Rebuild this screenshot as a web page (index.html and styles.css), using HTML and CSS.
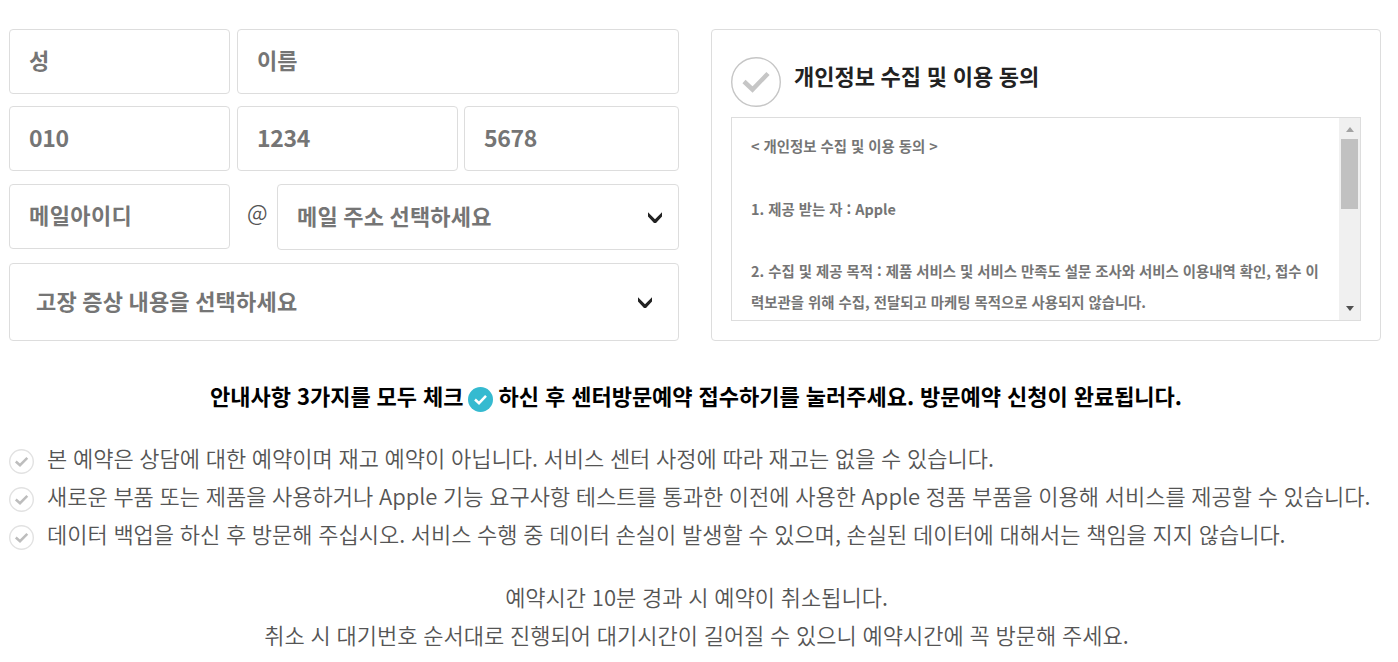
FILE: index.html
```
<!DOCTYPE html>
<html lang="ko">

<head>
    <meta charset="UTF-8">
    <meta name="viewport" content="width=device-width, initial-scale=1.0">
    <title>센터방문예약</title>
    <link rel="stylesheet" href="styles.css">
</head>

<body>
    <div class="top">
        <div class="form">
            <div class="row">
                <div class="field first">성</div>
                <div class="field grow">이름</div>
            </div>
            <div class="row">
                <div class="field first num">010</div>
                <div class="field middle num">1234</div>
                <div class="field grow num">5678</div>
            </div>
            <div class="row mail">
                <div class="field first mail_id">메일아이디</div>
                <span class="at">@</span>
                <div class="field select">
                    <span>메일 주소 선택하세요</span>
                    <svg class="arrow" viewBox="0 0 16 12"><path d="M1 0.3L8 7.2L15 0.3V4.6L9 11H7L1 4.6Z" /></svg>
                </div>
            </div>
            <div class="field symptom">
                <span>고장 증상 내용을 선택하세요</span>
                <svg class="arrow" viewBox="0 0 16 12"><path d="M1 0.3L8 7.2L15 0.3V4.6L9 11H7L1 4.6Z" /></svg>
            </div>
        </div>

        <div class="agree">
            <div class="agree_title">
                <svg class="check_big" viewBox="0 0 50 50">
                    <circle cx="25" cy="25" r="24.3" />
                    <path d="M13 24.5L21.5 32.5L37 16.5" />
                </svg>
                <h2>개인정보 수집 및 이용 동의</h2>
            </div>
            <div class="terms">
                <div class="terms_text">
                    <p>&lt; 개인정보 수집 및 이용 동의 &gt;</p>
                    <p>1. 제공 받는 자 : Apple</p>
                    <p>2. 수집 및 제공 목적 : 제품 서비스 및 서비스 만족도 설문 조사와 서비스 이용내역 확인, 접수 이<br>력보관을 위해 수집, 전달되고 마케팅 목적으로 사용되지 않습니다.</p>
                </div>
                <div class="scrollbar">
                    <i class="up"></i>
                    <div class="thumb"></div>
                    <i class="down"></i>
                </div>
            </div>
        </div>
    </div>

    <p class="guide">
        <span>안내사항 3가지를 모두 체크</span>
        <svg class="check_on" viewBox="0 0 25 25">
            <circle cx="12.5" cy="12.5" r="12.5" />
            <path d="M7 12.5L11 16.2L18 8.8" />
        </svg>
        <span>하신 후 센터방문예약 접수하기를 눌러주세요. 방문예약 신청이 완료됩니다.</span>
    </p>

    <ul class="notices">
        <li>
            <svg class="check" viewBox="0 0 25 25"><circle cx="12.5" cy="12.5" r="11.8" /><path d="M6.8 12.5L11 16.2L18.3 8.8" /></svg>
            <span>본 예약은 상담에 대한 예약이며 재고 예약이 아닙니다. 서비스 센터 사정에 따라 재고는 없을 수 있습니다.</span>
        </li>
        <li>
            <svg class="check" viewBox="0 0 25 25"><circle cx="12.5" cy="12.5" r="11.8" /><path d="M6.8 12.5L11 16.2L18.3 8.8" /></svg>
            <span>새로운 부품 또는 제품을 사용하거나 Apple 기능 요구사항 테스트를 통과한 이전에 사용한 Apple 정품 부품을 이용해 서비스를 제공할 수 있습니다.</span>
        </li>
        <li>
            <svg class="check" viewBox="0 0 25 25"><circle cx="12.5" cy="12.5" r="11.8" /><path d="M6.8 12.5L11 16.2L18.3 8.8" /></svg>
            <span>데이터 백업을 하신 후 방문해 주십시오. 서비스 수행 중 데이터 손실이 발생할 수 있으며, 손실된 데이터에 대해서는 책임을 지지 않습니다.</span>
        </li>
    </ul>

    <div class="cancel">
        <p>예약시간 10분 경과 시 예약이 취소됩니다.</p>
        <p>취소 시 대기번호 순서대로 진행되어 대기시간이 길어질 수 있으니 예약시간에 꼭 방문해 주세요.</p>
    </div>
</body>

</html>
```

FILE: styles.css
```
* {
    box-sizing: border-box;
}

body {
    margin: 0;
    padding: 29px 17px 0 9px;
    height: 662px;
    overflow: hidden;
    background: #fff;
    color: #555;
    font-family: "Noto Sans CJK KR", "Noto Sans", sans-serif;
    font-size: 22px;
    font-weight: 350;
    white-space: nowrap;
}

p,
h2,
ul {
    margin: 0;
    padding: 0;
}

.top {
    display: flex;
    justify-content: space-between;
    height: 312px;
}

.form {
    width: 670px;
}

.row {
    display: flex;
    height: 65px;
    margin-bottom: 12px;
}

.field {
    display: flex;
    align-items: center;
    height: 65px;
    padding: 0 19px 5px;
    border: 1px solid #ddd;
    border-radius: 4px;
    color: #757575;
    font-weight: 700;
}

.num {
    padding-bottom: 4px;
    font-size: 23px;
    letter-spacing: -0.3px;
}

.first {
    width: 221px;
    margin-right: 7px;
}

.middle {
    width: 221px;
    margin-right: 6px;
}

.grow {
    flex: 1;
}

.mail {
    height: 66px;
    margin: 13px 0;
}

.mail_id {
    letter-spacing: 0.4px;
}

.at {
    width: 40px;
    margin-top: 10px;
    line-height: 34px;
    padding-left: 10px;
}

.select {
    flex: 1;
    height: 66px;
    justify-content: space-between;
    padding-right: 15px;
    letter-spacing: 0.2px;
    word-spacing: -1px;
}

.symptom {
    height: 78px;
    justify-content: space-between;
    padding: 0 25px 5px 26px;
    letter-spacing: 0.2px;
    word-spacing: -1px;
}

.arrow {
    width: 16px;
    height: 12px;
    margin-top: 7px;
    fill: #222;
}

.agree {
    width: 670px;
    padding: 27px 19px 19px;
    border: 1px solid #ddd;
    border-radius: 4px;
}

.agree_title {
    display: flex;
    height: 60px;
}

.check_big {
    width: 50px;
    height: 50px;
    margin-right: 13px;
    fill: none;
    stroke: #c6c6c6;
    stroke-width: 1.4;
}

.check_big path {
    stroke-width: 4.5;
}

.agree h2 {
    color: #222;
    font-size: 22px;
    font-weight: 700;
    line-height: 36px;
    word-spacing: -0.5px;
}

.terms {
    display: flex;
    height: 204px;
    border: 1px solid #ddd;
}

.terms_text {
    flex: 1;
    padding: 12px 19px 0;
    overflow: hidden;
    color: #757575;
    font-size: 14.4px;
    font-weight: 700;
    line-height: 31.25px;
}

.terms_text p {
    margin-bottom: 31.25px;
}

.scrollbar {
    display: flex;
    flex-direction: column;
    align-items: center;
    width: 21px;
    padding: 9px 0;
    background: #f0f0f0;
}

.scrollbar i {
    border: 4.5px solid transparent;
}

.scrollbar .up {
    border-top: 0;
    border-bottom: 5px solid #a3a3a3;
}

.scrollbar .down {
    margin-top: auto;
    border-bottom: 0;
    border-top: 5px solid #505050;
}

.thumb {
    width: 17px;
    height: 70px;
    margin-top: 7px;
    background: #c1c1c1;
}

.guide {
    display: flex;
    margin: 35px 0 0 201px;
    color: #000;
    font-weight: 700;
    line-height: 38px;
    word-spacing: -0.2px;
}

.check_on {
    width: 25px;
    height: 25px;
    margin: 11px 6px 0 4px;
    fill: #35bad0;
}

.check_on path {
    fill: none;
    stroke: #fff;
    stroke-width: 2.5;
}

.notices {
    margin-top: 24px;
    list-style: none;
}

.notices li {
    display: flex;
    height: 38px;
    line-height: 38px;
    word-spacing: -0.5px;
}

.check {
    width: 25px;
    height: 25px;
    margin: 11px 13px 0 0;
    fill: none;
    stroke: #e2e2e2;
    stroke-width: 1.4;
}

.check path {
    stroke: #bdbdbd;
    stroke-width: 2.5;
}

.cancel {
    margin-top: 25px;
    padding-left: 3px;
    line-height: 38px;
    text-align: center;
    word-spacing: -0.4px;
}
```
